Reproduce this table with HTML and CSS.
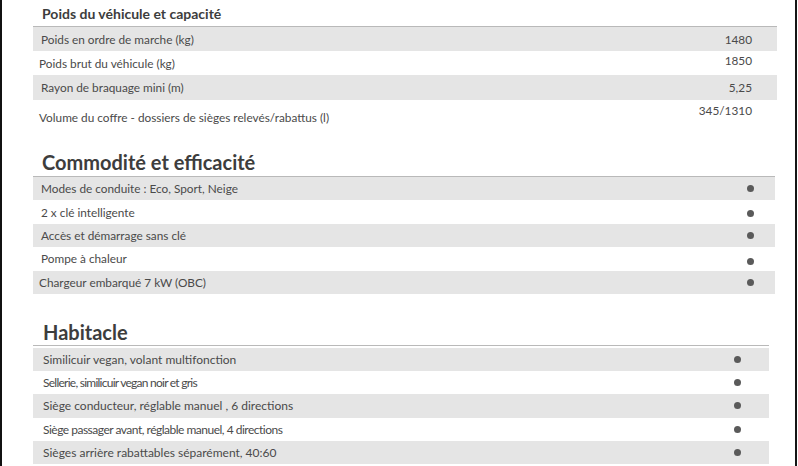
FILE: index.html
```html
<!DOCTYPE html>
<html lang="fr">
<head>
<meta charset="utf-8">
<title>Caractéristiques</title>
<link rel="stylesheet" href="styles.css">
</head>
<body>
<div class="page">
  <section class="spec spec-1">
    <h3 class="spec-title small">Poids du véhicule et capacité</h3>
    <div class="rows">
      <div class="row"><span class="label">Poids en ordre de marche (kg)</span><span class="value">1480</span></div>
      <div class="row"><span class="label shift">Poids brut du véhicule (kg)</span><span class="value raise">1850</span></div>
      <div class="row tall"><span class="label">Rayon de braquage mini (m)</span><span class="value">5,25</span></div>
      <div class="row tall"><span class="label shift low">Volume du coffre - dossiers de sièges relevés/rabattus (l)</span><span class="value raise">345/1310</span></div>
    </div>
  </section>

  <section class="spec spec-2">
    <h2 class="spec-title">Commodité et efficacité</h2>
    <div class="rows">
      <div class="row"><span class="label">Modes de conduite : Eco, Sport, Neige</span><span class="dot"></span></div>
      <div class="row"><span class="label">2 x clé intelligente</span><span class="dot down1"></span></div>
      <div class="row"><span class="label">Accès et démarrage sans clé</span><span class="dot"></span></div>
      <div class="row"><span class="label">Pompe à chaleur</span><span class="dot down3"></span></div>
      <div class="row"><span class="label shift">Chargeur embarqué 7 kW (OBC)</span><span class="dot"></span></div>
    </div>
  </section>

  <section class="spec spec-3">
    <h2 class="spec-title">Habitacle</h2>
    <div class="rows">
      <div class="row"><span class="label">Similicuir vegan, volant multifonction</span><span class="dot"></span></div>
      <div class="row"><span class="label narrow-2">Sellerie, similicuir vegan noir et gris</span><span class="dot"></span></div>
      <div class="row"><span class="label">Siège conducteur, réglable manuel , 6 directions</span><span class="dot"></span></div>
      <div class="row"><span class="label narrow-1">Siège passager avant, réglable manuel, 4 directions</span><span class="dot"></span></div>
      <div class="row"><span class="label">Sièges arrière rabattables séparément, 40:60</span><span class="dot"></span></div>
    </div>
  </section>
</div>
</body>
</html>
```
FILE: styles.css
```css
html, body {
  margin: 0;
  padding: 0;
  background: #fff;
}

body {
  font-family: "Lato", "Liberation Sans", sans-serif;
  color: #4a4a4a;
  overflow: hidden;
}

.page {
  box-sizing: border-box;
  width: 797px;
  height: 466px;
  border-left: 2px solid #111;
  border-right: 2px solid #151515;
  padding-left: 31px;
}

.spec-title {
  margin: 0;
  color: #3d3d3d;
  font-weight: 700;
  font-size: 20px;
  line-height: 24px;
  padding-left: 9px;
  border-bottom: 1px solid #b9b9b9;
}

.spec-title.small {
  font-size: 14px;
  line-height: 17px;
  padding-top: 5px;
  padding-bottom: 4px;
}

.rows {
  display: flex;
  flex-direction: column;
}

.row {
  display: flex;
  align-items: center;
  justify-content: space-between;
  height: 24px;
  font-size: 11.8px;
}

.row:nth-child(odd) {
  background: #e5e5e5;
}

.label {
  padding-left: 8px;
  white-space: nowrap;
}

.label.shift {
  padding-left: 6px;
}

.label.low {
  padding-top: 9px;
}

.value {
  padding-right: 25px;
}

.value.raise {
  padding-bottom: 5px;
}

.row.tall {
  height: 25px;
}

/* Section 1 */
.spec-1 {
  width: 744px;
}

/* Section 2 */
.spec-2 {
  width: 742px;
}

.spec-2 .spec-title {
  padding-top: 25px;
  padding-bottom: 2px;
}

.spec-2 .row {
  height: 23.4px;
}

.spec-2 .dot {
  margin-right: 21px;
}

/* Section 3 */
.spec-3 {
  width: 736px;
}

.spec-3 .spec-title {
  padding-top: 26px;
  padding-bottom: 1px;
  padding-left: 10px;
  margin-bottom: 2px;
}

.spec-3 .row {
  height: 23.2px;
  font-size: 12px;
}

.spec-3 .label {
  padding-left: 10px;
}

.spec-3 .dot {
  margin-right: 28px;
}

.narrow-1 {
  letter-spacing: -0.5px;
}

.narrow-2 {
  letter-spacing: -0.75px;
}

.dot {
  width: 7px;
  height: 7px;
  border-radius: 50%;
  background: #5a5a5a;
  flex: none;
}

.dot.down1 {
  margin-top: 2px;
}

.dot.down3 {
  margin-top: 5px;
}
```
